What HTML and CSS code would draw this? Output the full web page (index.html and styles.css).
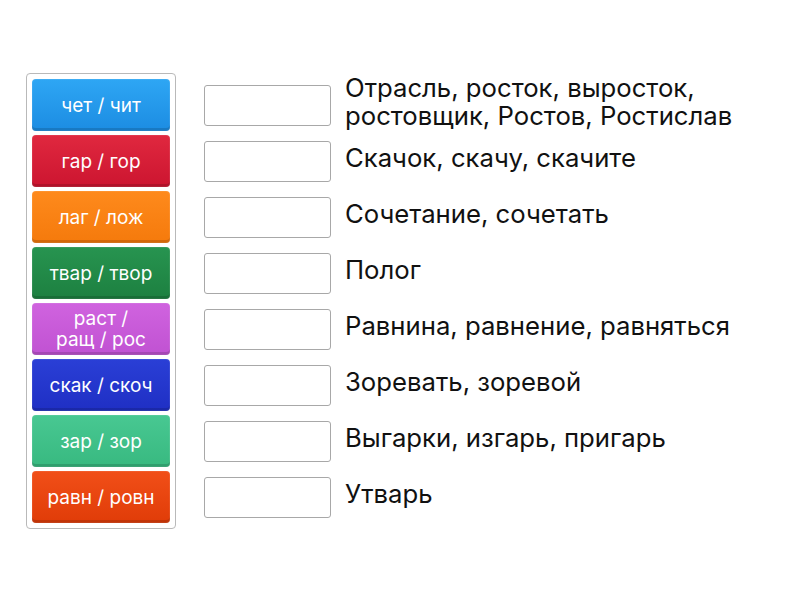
FILE: index.html
```html
<!DOCTYPE html>
<html lang="ru">
<head>
<meta charset="utf-8">
<link rel="stylesheet" href="styles.css">
</head>
<body>
<div class="board">
  <div class="bank">
    <div class="tile c1">чет / чит</div>
    <div class="tile c2">гар / гор</div>
    <div class="tile c3">лаг / лож</div>
    <div class="tile c4">твар / твор</div>
    <div class="tile c5">раст /<br>ращ / рос</div>
    <div class="tile c6">скак / скоч</div>
    <div class="tile c7">зар / зор</div>
    <div class="tile c8">равн / ровн</div>
  </div>
  <div class="targets">
    <div class="row"><div class="slot"></div><div class="label">Отрасль, росток, выросток, ростовщик, Ростов, Ростислав</div></div>
    <div class="row"><div class="slot"></div><div class="label">Скачок, скачу, скачите</div></div>
    <div class="row"><div class="slot"></div><div class="label">Сочетание, сочетать</div></div>
    <div class="row"><div class="slot"></div><div class="label">Полог</div></div>
    <div class="row"><div class="slot"></div><div class="label">Равнина, равнение, равняться</div></div>
    <div class="row"><div class="slot"></div><div class="label">Зоревать, зоревой</div></div>
    <div class="row"><div class="slot"></div><div class="label">Выгарки, изгарь, пригарь</div></div>
    <div class="row"><div class="slot"></div><div class="label">Утварь</div></div>
  </div>
</div>
</body>
</html>
```
FILE: styles.css
```css
* { box-sizing: border-box; }
html, body { margin: 0; padding: 0; background: #fff; }
body {
  width: 800px;
  height: 600px;
  font-family: Inter, "Noto Sans", sans-serif;
  color: #111;
}
.board {
  display: flex;
  align-items: flex-start;
  padding: 73px 0 0 26px;
  gap: 28px;
}
.bank {
  border: 1px solid #b9b9b9;
  border-radius: 4px;
  padding: 5px;
  display: flex;
  flex-direction: column;
  gap: 4px;
  width: 150px;
}
.tile {
  height: 52px;
  border-radius: 4px;
  color: #fff;
  font-size: 19px;
  line-height: 21px;
  text-align: center;
  display: flex;
  align-items: center;
  justify-content: center;
  box-shadow: inset 0 -3px 0 rgba(0,0,0,0.14), inset 0 0 0 1px rgba(255,255,255,0.08);
}
.c1 { background: linear-gradient(#2ea6f4, #1c8ce2); }
.c2 { background: linear-gradient(#e0283f, #cc1530); }
.c3 { background: linear-gradient(#fe8a1c, #f57a0c); }
.c4 { background: linear-gradient(#279450, #1d8040); }
.c5 { background: linear-gradient(#d063df, #c052d2); }
.c6 { background: linear-gradient(#2a3fd6, #1f2fc4); }
.c7 { background: linear-gradient(#48c892, #38b980); }
.c8 { background: linear-gradient(#f14f18, #e03c08); }
.targets {
  padding-top: 6px;
  display: flex;
  flex-direction: column;
  gap: 4px;
}
.row {
  height: 52px;
  display: flex;
  align-items: center;
  gap: 14px;
}
.slot {
  width: 127px;
  height: 41px;
  border: 1px solid #a8a8a8;
  border-radius: 3px;
  flex: none;
}
.label {
  font-size: 25.7px;
  line-height: 28px;
  width: 440px;
  margin-top: -6px;
}
```
